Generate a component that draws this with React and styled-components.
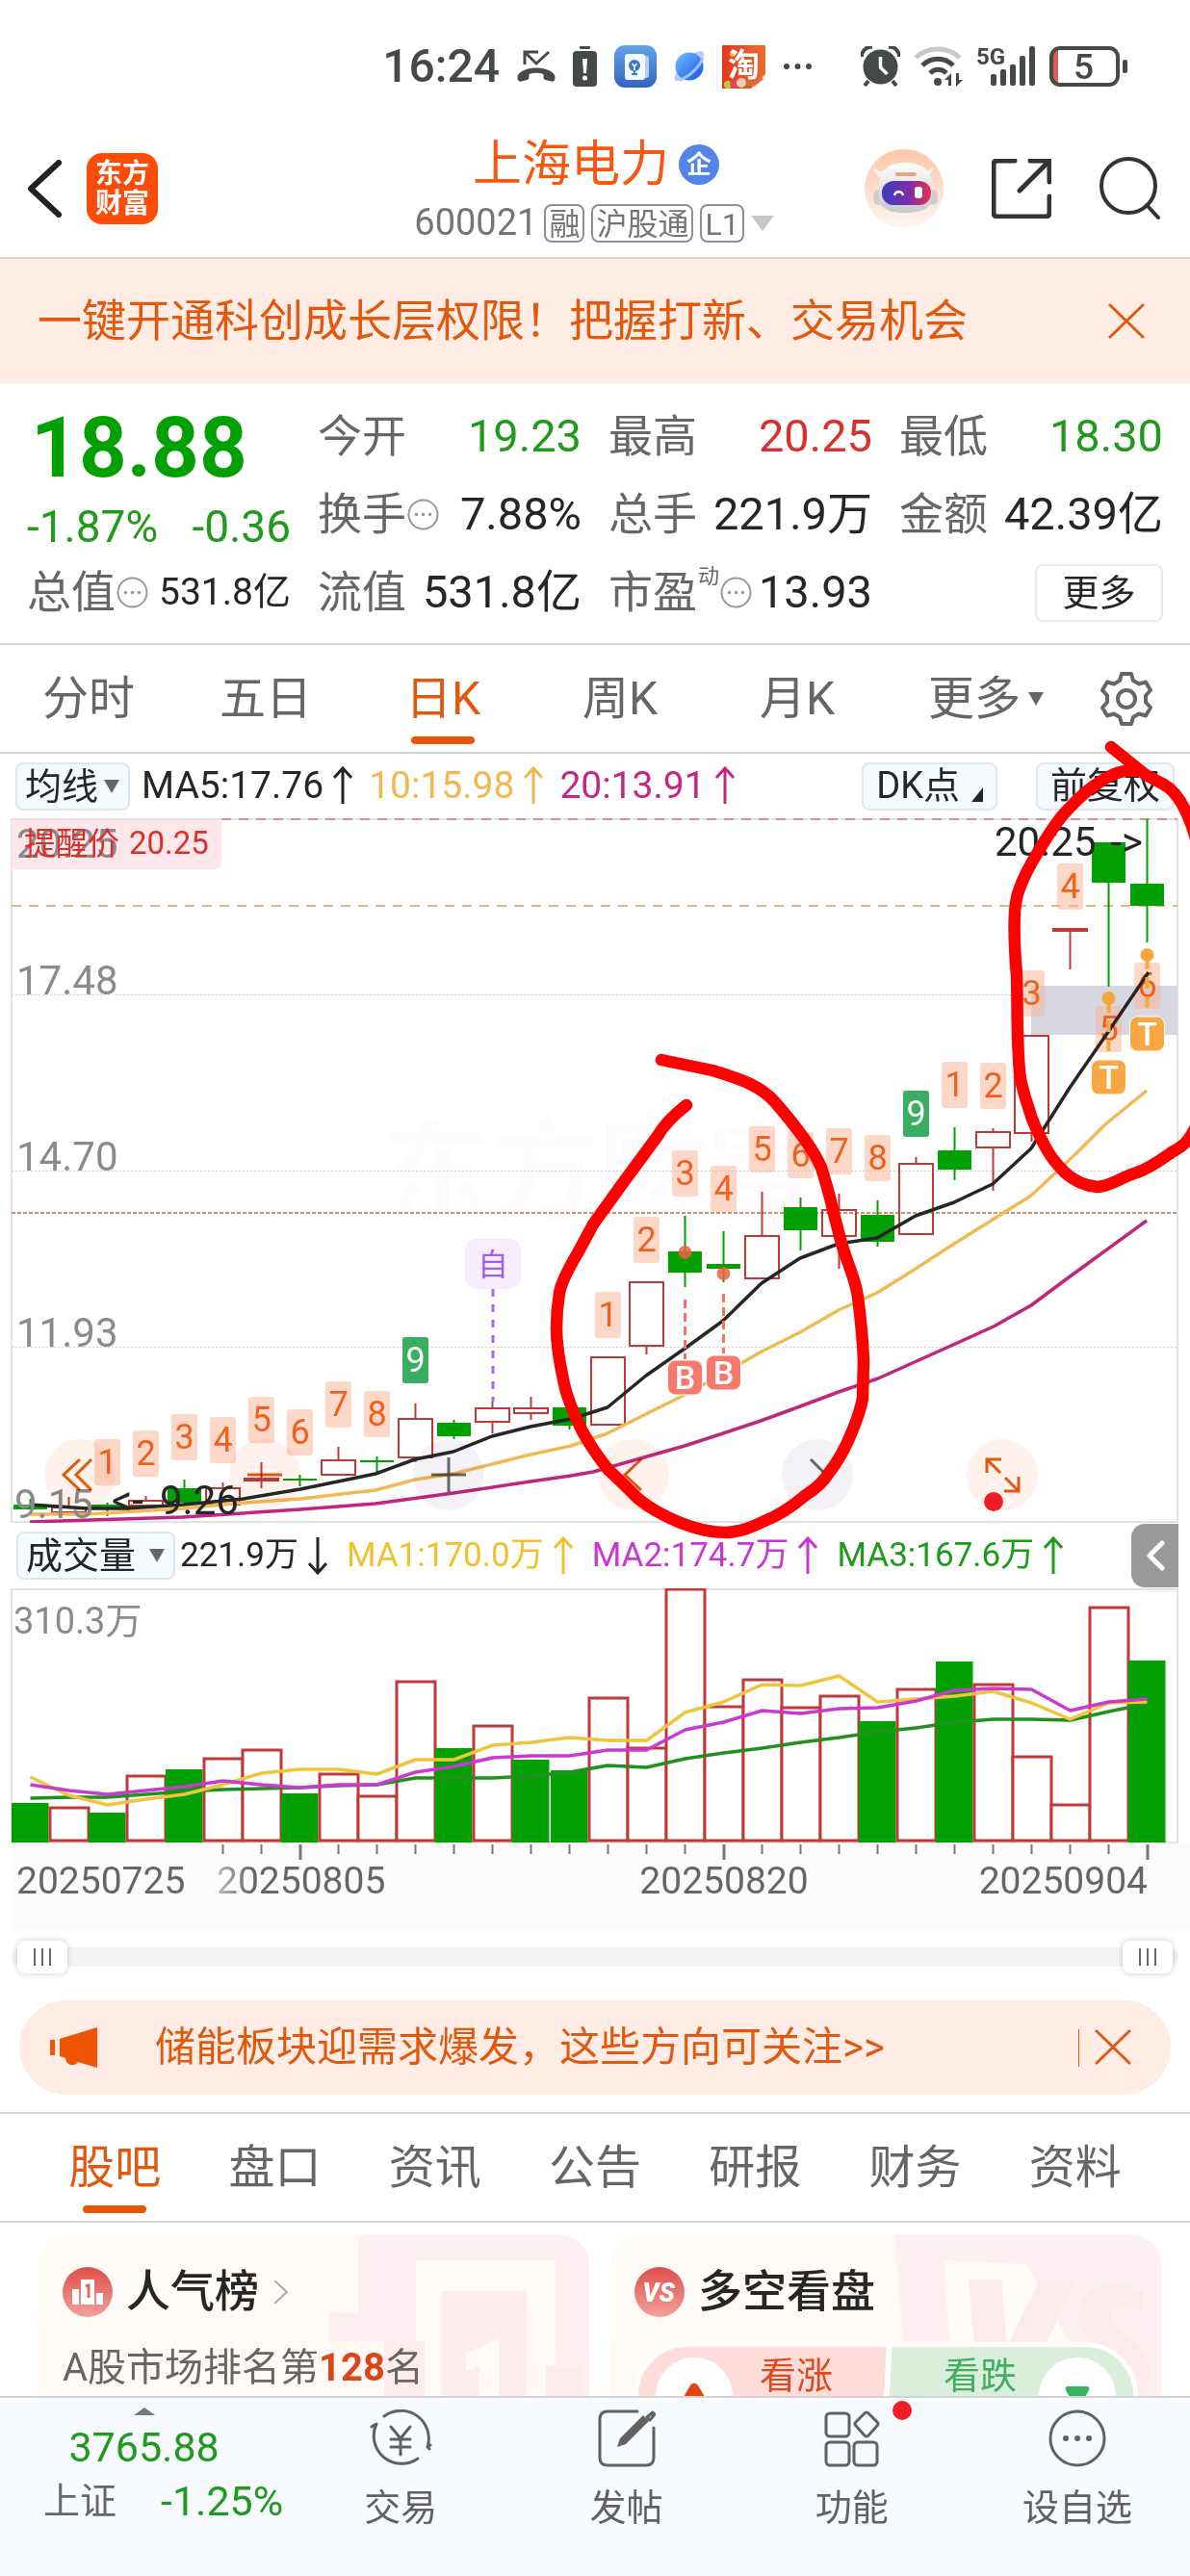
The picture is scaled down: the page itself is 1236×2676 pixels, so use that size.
import React from 'react';
import styled, { createGlobalStyle, css } from 'styled-components';

const FONT = 'Roboto, "Noto Sans CJK SC", "Noto Sans", sans-serif';
const ORANGE = '#e0590f';
const ACCENT = '#ea5504';
const GREEN = '#1f9a1c';
const BAR_GREEN = '#03a003';
const RED = '#d9302c';
const BAR_RED = '#bd3a38';
const INK = '#262626';
const GREY = '#666';
const LINE = '#d4d4d6';

const GlobalStyle = createGlobalStyle`
  *, *::before, *::after { box-sizing: border-box; }
  body { margin: 0; background: #fff; font-family: ${FONT}; line-height: 1.2; color: ${INK}; }
  button, select, input { font: inherit; color: inherit; margin: 0; }
  button { border: 0; padding: 0; background: none; cursor: pointer; }
  h1, h2, p, dl, dd, dt { margin: 0; font-weight: inherit; font-size: inherit; }
  a { color: inherit; text-decoration: none; }
  svg { display: block; }
`;

const Screen = styled.div`
  height: 100vh;
  display: flex;
  flex-direction: column;
  overflow: hidden;
`;

const Content = styled.main`
  flex: 1;
  min-height: 0;
  overflow-x: hidden;
  overflow-y: auto;
  scrollbar-width: none;
`;

/* ---------- status bar ---------- */
const StatusBar = styled.div`
  height: 124px;
  padding: 14px 64px 0 0;
  display: flex;
  align-items: flex-start;
  justify-content: flex-end;
  gap: 50px;
  color: #454a47;
`;

const StatusGroup = styled.div`
  display: flex;
  align-items: center;
  height: 110px;
  gap: ${(p) => p.$gap}px;
`;

const Clock = styled.span`
  font-size: 48px;
  font-weight: 500;
`;

/* ---------- header ---------- */
const Header = styled.header`
  height: 145px;
  padding: 0 30px 0 28px;
  display: grid;
  grid-template-columns: 1fr auto 1fr;
  align-items: center;
  border-bottom: 2px solid ${LINE};
`;

const HeaderSide = styled.div`
  display: flex;
  align-items: center;
  gap: ${(p) => p.$gap}px;
  justify-content: ${(p) => (p.$end ? 'flex-end' : 'flex-start')};
`;

const Brand = styled.a`
  width: 74px;
  height: 74px;
  border-radius: 16px;
  background: #fc4c05;
  color: #fff;
  font-size: 28px;
  line-height: 31px;
  font-weight: 700;
  display: grid;
  place-content: center;
  text-align: center;
`;

const TitleBlock = styled.div`
  display: grid;
  gap: 10px;
  justify-items: center;
`;

const TitleRow = styled.div`
  display: flex;
  align-items: center;
  gap: 10px;
  height: 62px;
  padding: 4px 0 0 4px;
`;

const StockName = styled.h1`
  font-size: 51px;
  line-height: 62px;
  color: #f8570f;
`;

const CompanyBadge = styled.span`
  width: 42px;
  height: 42px;
  border-radius: 50%;
  background: #5384e6;
  color: #fff;
  font-size: 26px;
  line-height: 42px;
  font-weight: 700;
  text-align: center;
`;

const CodeRow = styled.div`
  display: flex;
  align-items: center;
  gap: 7px;
  height: 44px;
  color: #757575;
  font-size: 38px;
`;

const MarketTag = styled.span`
  height: 40px;
  padding: 0 3px;
  border: 2px solid #909090;
  border-radius: 8px;
  font-size: 32px;
  line-height: 38px;
`;

const Caret = styled.span`
  display: inline-block;
  width: 0;
  height: 0;
  border: ${(p) => p.$half || 7}px solid transparent;
  border-bottom-width: 0;
  border-top: ${(p) => p.$tall || 14}px solid ${(p) => p.$color || '#666'};
`;

/* ---------- announcement ---------- */
const Announcement = styled.section`
  height: 129px;
  padding: 0 47px 0 39px;
  display: flex;
  align-items: center;
  justify-content: space-between;
  background: #ffede5;
  color: ${ORANGE};
  font-size: 46px;
`;

/* ---------- quote ---------- */
const QuotePanel = styled.section`
  padding: 15px 28px 12px;
  display: grid;
  grid-template-columns: repeat(4, 1fr);
  grid-auto-rows: 81px;
  column-gap: 28px;
  border-bottom: 2px solid ${LINE};
  font-size: 46px;
`;

const PriceCell = styled.div`
  grid-row: span 2;
  padding-top: 10px;
  color: #03a003;
`;

const Price = styled.div`
  padding-left: 4px;
  font-size: 87px;
  line-height: 84px;
  font-weight: 700;
`;

const Change = styled.div`
  display: flex;
  justify-content: space-between;
  margin-top: 12px;
  font-size: 46px;
  line-height: 56px;
  color: ${GREEN};
`;

const QuoteItem = styled.div`
  display: flex;
  align-items: center;
  justify-content: space-between;
  white-space: nowrap;
`;

const QuoteLabel = styled.span`
  display: flex;
  align-items: center;
  gap: 1px;
  color: ${GREY};
`;

const QuoteSup = styled.sup`
  align-self: flex-start;
  font-size: 22px;
  line-height: 22px;
`;

const TONES = { up: RED, down: GREEN, flat: INK };
const QuoteValue = styled.span`
  color: ${(p) => TONES[p.$tone || 'flat']};
  font-size: ${(p) => (p.$small ? 39 : 47)}px;
`;

const MoreButton = styled.button`
  justify-self: end;
  align-self: center;
  width: 133px;
  height: 60px;
  border: 2px solid #e7e7ea;
  border-radius: 8px;
  font-size: 38px;
  line-height: 54px;
`;

/* ---------- tabs ---------- */
const TabBar = styled.nav`
  display: grid;
  grid-template-columns: ${(p) => p.$columns};
  height: 113px;
  padding: 0 ${(p) => p.$pad || 0}px;
  border-bottom: 2px solid ${LINE};
`;

const Tab = styled.button`
  position: relative;
  display: flex;
  align-items: center;
  justify-content: center;
  gap: 8px;
  font-size: 48px;
  color: ${(p) => (p.$active ? ORANGE : GREY)};
  ${(p) =>
    p.$active &&
    css`
      &::after {
        content: '';
        position: absolute;
        bottom: 8px;
        left: 50%;
        width: 66px;
        height: 8px;
        margin-left: -33px;
        border-radius: 4px;
        background: ${ACCENT};
      }
    `}
`;

const GearButton = styled.button`
  display: flex;
  align-items: center;
  padding-left: 13px;
  color: ${GREY};
`;

/* ---------- charts ---------- */
const ChartSection = styled.section`
  position: relative;
`;

const ChartToolbar = styled.div`
  height: 67px;
  padding: 0 16px;
  display: flex;
  align-items: center;
  gap: 12px;
  white-space: nowrap;
`;

const VolumeToolbar = styled(ChartToolbar)`
  height: 68px;
  padding: 0 12px 0 17px;
  gap: 5px;
`;

const PickerBox = styled.label`
  display: grid;
  align-items: center;
  & > * { grid-area: 1 / 1; }
  & > span { justify-self: end; margin-right: 11px; pointer-events: none; }
`;

const Picker = styled.select`
  appearance: none;
  height: 50px;
  padding: 0 ${(p) => p.$right}px 0 8px;
  border: 2px solid #e0e6ec;
  border-radius: 8px;
  background: #f5faff;
  font-size: 38px;
  line-height: 46px;
`;

const ChipButton = styled.button`
  display: flex;
  align-items: center;
  gap: 12px;
  height: 50px;
  padding: 0 ${(p) => p.$pad}px;
  border: 2px solid #e0e6ec;
  border-radius: 8px;
  background: #f5faff;
  font-size: 38px;
`;

const ChipGroup = styled.div`
  display: flex;
  gap: 40px;
  margin-left: auto;
`;

const Legend = styled.div`
  display: flex;
  gap: ${(p) => p.$gap}px;
  font-size: ${(p) => p.$size}px;
`;

const LegendItem = styled.span`
  display: flex;
  align-items: center;
  gap: 10px;
  color: ${(p) => p.$color};
`;

const CollapseButton = styled.button`
  width: 49px;
  height: 66px;
  margin-left: auto;
  display: grid;
  place-items: center;
  border-radius: 14px 0 0 14px;
  background: #9b989b;
`;

const PriceArea = styled.div`
  position: relative;
`;

const ChartTools = styled.div`
  position: absolute;
  left: 46px;
  right: 158px;
  bottom: 13px;
  display: flex;
  justify-content: space-between;
  mix-blend-mode: multiply;
`;

const RoundTool = styled.button`
  position: relative;
  width: 74px;
  height: 74px;
  border-radius: 50%;
  background: ${(p) => (p.$grey ? '#f5f2f7' : '#fff1ec')};
  color: ${(p) => (p.$grey ? '#666' : ORANGE)};
  mix-blend-mode: multiply;
`;

const Dot = styled.i`
  position: absolute;
  width: 20px;
  height: 20px;
  border-radius: 50%;
  background: #f01e23;
  left: ${(p) => p.$left};
  top: ${(p) => p.$top}px;
`;

const MarkerLayer = styled.svg`
  position: absolute;
  top: 0;
  left: 0;
  width: 100%;
  overflow: visible;
  pointer-events: none;
`;

const Plot = styled.svg`
  width: 100%;
  height: auto;
  font-family: ${FONT};
`;

/* ---------- range slider ---------- */
const RangeTrack = styled.div`
  height: 54px;
  margin: 0 12px;
  display: grid;
  align-items: center;
  & > * { grid-area: 1 / 1; }
  &::before {
    content: '';
    grid-area: 1 / 1;
    height: 20px;
    border-radius: 10px;
    background: #f5f2f6;
  }
`;

const RangeInput = styled.input`
  appearance: none;
  width: auto;
  margin: 0 6px;
  height: 36px;
  background: none;
  pointer-events: none;
  &::-webkit-slider-thumb {
    appearance: none;
    width: 52px;
    height: 34px;
    border-radius: 8px;
    pointer-events: auto;
    background:
      linear-gradient(#666, #666) 17px 8px / 2px 18px no-repeat,
      linear-gradient(#666, #666) 25px 8px / 2px 18px no-repeat,
      linear-gradient(#666, #666) 33px 8px / 2px 18px no-repeat,
      #fff;
    box-shadow: 0 0 6px rgba(60, 50, 70, 0.25);
  }
`;

/* ---------- notice ---------- */
const NoticeWrap = styled.section`
  padding: 18px 20px;
  border-bottom: 2px solid ${LINE};
`;

const Notice = styled.div`
  height: 98px;
  padding: 0 41px 0 31px;
  display: flex;
  align-items: center;
  border-radius: 49px;
  background: #ffede5;
  color: ${ORANGE};
  font-size: 42px;
`;

const NoticeText = styled.a`
  flex: 1;
  margin-left: 58px;
`;

const NoticeDivider = styled.span`
  width: 1px;
  height: 39px;
  margin-right: 16px;
  background: ${ORANGE};
`;

/* ---------- cards ---------- */
const Cards = styled.section`
  display: grid;
  grid-template-columns: 1fr 1fr;
  gap: 22px;
  padding: 13px 30px 30px 40px;
`;

const Card = styled.article`
  position: relative;
  height: 300px;
  padding: 32px 25px;
  overflow: hidden;
  border-radius: 30px;
  background: linear-gradient(180deg, #fffbf6 0%, #fffaf6 60%, #fff3f4 100%);
`;

const CardArt = styled.svg`
  position: absolute;
  top: 0;
  right: 0;
`;

const CardHead = styled.h2`
  position: relative;
  display: flex;
  align-items: center;
  gap: 14px;
  height: 54px;
  font-size: 46px;
  font-weight: 500;
`;

const CardText = styled.p`
  position: relative;
  margin-top: 26px;
  font-size: 40px;
  line-height: 52px;
  color: ${GREY};
  b { color: #dc4518; font-weight: 700; }
`;

const VoteBar = styled.div`
  position: relative;
  display: grid;
  grid-template-columns: 1fr 1fr;
  height: 100px;
  margin: 30px 4px 0;
  border-radius: 50px;
  overflow: hidden;
  box-shadow: 0 0 0 5px #fff;
  background: linear-gradient(93deg, #fedcda 49.6%, #fff 49.7%, #fff 50.7%, #d9efdc 50.8%);
`;

const VoteButton = styled.button`
  display: flex;
  align-items: flex-start;
  justify-content: space-between;
  flex-direction: ${(p) => (p.$down ? 'row-reverse' : 'row')};
  padding: ${(p) => (p.$down ? '11px 18px 0 60px' : '11px 55px 0 18px')};
  font-size: 38px;
  line-height: 38px;
  color: ${(p) => (p.$down ? '#45ae60' : '#dc4b1c')};
`;

const VoteDisc = styled.span`
  width: 80px;
  height: 80px;
  display: grid;
  place-items: center;
  border-radius: 50%;
  background: #fff;
`;

/* ---------- bottom bar ---------- */
const BottomBar = styled.nav`
  height: 187px;
  flex: none;
  display: grid;
  grid-template-columns: 299fr repeat(4, 234fr);
  background: #f7fbff;
  border-top: 2px solid ${LINE};
`;

const IndexLink = styled.a`
  display: grid;
  grid-template-rows: 8px 48px 48px;
  row-gap: 8px;
  padding-top: 10px;
  align-content: start;
  justify-items: center;
  font-size: 43px;
  line-height: 50px;
  color: ${GREEN};
`;

const UpMark = styled.i`
  border: 11px solid transparent;
  border-top-width: 0;
  border-bottom: 8px solid #777;
`;

const IndexRow = styled.span`
  display: flex;
  gap: 46px;
  padding-left: 40px;
  small { font-size: 38px; color: ${GREY}; }
`;

const NavItem = styled.a`
  position: relative;
  display: flex;
  flex-direction: column;
  align-items: center;
  gap: 20px;
  padding-top: 12px;
  font-size: 38px;
  line-height: 44px;
  color: #616161;
`;

/* ---------- icons ---------- */
const stroke = (w, c = 'currentColor') => ({
  fill: 'none', stroke: c, strokeWidth: w, strokeLinecap: 'round', strokeLinejoin: 'round',
});

const CloseIcon = () => (
  <svg width="38" height="38" viewBox="0 0 38 38"><path d="M2 2l34 33M36 2L2 35" {...stroke(3)} /></svg>
);

const InfoIcon = () => (
  <svg width="33" height="33" viewBox="0 0 33 33">
    <circle cx="16.5" cy="16.5" r="15" fill="none" stroke="#999" strokeWidth="2" />
    <g fill="#999"><circle cx="9.5" cy="16.5" r="1.8" /><circle cx="16.5" cy="16.5" r="1.8" /><circle cx="23.5" cy="16.5" r="1.8" /></g>
  </svg>
);

const ArrowIcon = ({ down }) => (
  <svg width="20" height="40" viewBox="0 0 20 40">
    <path d={down ? 'M10 1v37M1 28l9 10 9-10' : 'M10 39V2M1 12l9-10 9 10'} fill="none" stroke="currentColor" strokeWidth="3" />
  </svg>
);

const MissedCall = () => (
  <svg width="40" height="34" viewBox="0 0 40 34">
    <path d="M8 15V2h14M8 2l12 12L33 2" fill="none" stroke="currentColor" strokeWidth="3" />
    <path d="M1 31c-2-5 2-9 9-11 6-2 14-2 20 0 7 2 11 6 9 11-.5 1.500-2 2-3.500 1.600l-6-1.600c-2-.6-2-2-2-6-5-1.600-10-1.600-15 0 0 4 0 5.400-2 6l-6 1.600c-1.500.4-3-.1-3.500-1.600z" fill="currentColor" />
  </svg>
);

const LowBattery = () => (
  <svg width="25" height="42" viewBox="0 0 25 42">
    <rect x="7" y="0" width="11" height="3" rx="1" fill="currentColor" />
    <rect x="0" y="5" width="25" height="37" rx="4" fill="currentColor" />
    <path d="M10 13h5l-1 15h-3z" fill="#fff" /><circle cx="12.500" cy="33" r="2.500" fill="#fff" />
  </svg>
);

const NotesApp = () => (
  <svg width="44" height="44" viewBox="0 0 44 44">
    <defs><linearGradient id="notes" x2="0" y2="1"><stop stopColor="#64a3e6" /><stop offset="1" stopColor="#3363c0" /></linearGradient></defs>
    <rect width="44" height="44" rx="11" fill="url(#notes)" />
    <rect x="20" y="11" width="16" height="23" rx="3" fill="#b4d0f3" />
    <rect x="11" y="9" width="21" height="27" rx="3" fill="#f4f9ff" />
    <circle cx="21" cy="21" r="6" fill="#3b76cf" /><path d="M18 30h6M21 29v-7" stroke="#3b76cf" strokeWidth="2" fill="none" />
    <path d="M18.500 19l2.500 3 2.500-3M21 22v4" stroke="#fff" strokeWidth="1.500" fill="none" />
  </svg>
);

const PlanetApp = () => (
  <svg width="32" height="34" viewBox="0 0 32 34">
    <defs><linearGradient id="planet" x2="1" y2="1"><stop stopColor="#6bc4fb" /><stop offset="1" stopColor="#1d50e8" /></linearGradient></defs>
    <path d="M21 3c6-3 11-3 10 3C29 15 14 30 5 32c-6 1-5-5-2-10z" fill="#b9cdf8" />
    <circle cx="16" cy="17" r="14.500" fill="url(#planet)" />
    <path d="M30 8C27 17 16 28 6 31" stroke="#9fc6fb" strokeWidth="3" fill="none" />
  </svg>
);

const ShopApp = () => (
  <svg width="45" height="45" viewBox="0 0 45 45">
    <defs><linearGradient id="shop" x2="1"><stop stopColor="#e2381f" /><stop offset="1" stopColor="#ee6a2c" /></linearGradient></defs>
    <rect width="45" height="45" fill="url(#shop)" />
    <path d="M30 45l15-15v15z" fill="#fff" />
    <circle cx="6" cy="41" r="4" fill="#b9cf42" /><circle cx="12" cy="40" r="4" fill="#e8455c" />
    <circle cx="20" cy="39" r="5" fill="#ecd2b4" /><circle cx="29" cy="39" r="3" fill="#cf6d45" />
    <path d="M32 42l10-8" stroke="#e36e49" strokeWidth="3" />
    <circle cx="11" cy="9" r="3" fill="#fcc437" />
    <text x="6" y="32" fontSize="33" fontWeight="700" fill="#fff" fontFamily={FONT}>淘</text>
  </svg>
);

const StatusDots = () => (
  <svg width="31" height="8" viewBox="0 0 31 8"><g fill="currentColor"><circle cx="4" cy="4" r="3" /><circle cx="15.500" cy="4" r="3" /><circle cx="27" cy="4" r="3" /></g></svg>
);

const AlarmIcon = () => (
  <svg width="41" height="42" viewBox="0 0 41 42">
    <circle cx="20.500" cy="21.500" r="18" fill="currentColor" />
    <path d="M1 11c0-6 5-11 11-10M40 11c0-6-5-11-11-10M8 36l-4 5M33 36l4 5" fill="none" stroke="currentColor" strokeWidth="4" />
    <path d="M20.500 11v11l7 7" fill="none" stroke="#fff" strokeWidth="3.500" />
  </svg>
);

const WifiIcon = () => (
  <svg width="51" height="42" viewBox="0 0 51 42">
    <path d="M2 12C15 0 35 0 48 12" fill="none" stroke="#c9c7cb" strokeWidth="5" />
    <path d="M9 20c9-9 23-9 32 0M17 28c5-5 12-5 17 0" fill="none" stroke="currentColor" strokeWidth="5" />
    <circle cx="25" cy="37" r="4" fill="currentColor" />
    <path d="M32 35l7-7v13h-3v-6zM51 35l-7 7V28h3v7z" fill="currentColor" />
  </svg>
);

const SignalIcon = () => (
  <svg width="62" height="42" viewBox="0 0 62 42" overflow="visible">
    <text x="0" y="19" fontSize="24" fontWeight="700" fill="currentColor" fontFamily={FONT}>5G</text>
    <g fill="currentColor">
      <rect x="15" y="29" width="6" height="12" rx="2" /><rect x="25" y="24" width="6" height="17" rx="2" />
      <rect x="35" y="19" width="6" height="22" rx="2" /><rect x="45" y="10" width="6" height="31" rx="2" />
      <rect x="55" y="0" width="6" height="41" rx="2" />
    </g>
  </svg>
);

const BatteryIcon = () => (
  <svg width="82" height="42" viewBox="0 0 82 42">
    <path d="M9 3h-1q-6 2-6 9v18q0 7 6 9h1z" fill="#dd5a56" />
    <rect x="2" y="2" width="69" height="38" rx="9" fill="none" stroke="currentColor" strokeWidth="4" />
    <rect x="76" y="14" width="5" height="14" rx="2" fill="currentColor" />
    <text x="35.500" y="34" fontSize="37" fontWeight="500" textAnchor="middle" fill="currentColor" fontFamily={FONT}>5</text>
  </svg>
);

const Robot = () => (
  <svg width="82" height="82" viewBox="0 0 82 82">
    <defs>
      <linearGradient id="halo" x2="0" y2="1"><stop stopColor="#fdc6a8" /><stop offset="1" stopColor="#fff6f0" /></linearGradient>
      <linearGradient id="visor" x2="1"><stop stopColor="#3f3cbf" /><stop offset=".55" stopColor="#7a2fa8" /><stop offset="1" stopColor="#e8334f" /></linearGradient>
      <linearGradient id="helmet" x2="0" y2="1"><stop stopColor="#fff" /><stop offset="1" stopColor="#c9c5cc" /></linearGradient>
    </defs>
    <circle cx="41" cy="41" r="41" fill="url(#halo)" />
    <path d="M9 18c0 6 3 10 10 12l4-8c-6 2-11 0-14-4zM71 18c0 6-3 10-10 12l-4-8c6 2 11 0 14-4z" fill="#f3eeee" />
    <rect x="9" y="42" width="12" height="16" rx="6" fill="#cfcbd0" /><rect x="64" y="42" width="12" height="16" rx="6" fill="#cfcbd0" />
    <path d="M15 38c0-16 10-24 27-24s28 8 28 24v10c0 12-8 18-28 18s-27-6-27-18z" fill="url(#helmet)" />
    <rect x="32" y="24" width="22" height="4" rx="2" fill="#e8a778" />
    <rect x="18" y="33" width="51" height="25" rx="12" fill="url(#visor)" />
    <path d="M31 48c1-5 8-5 9 0" fill="none" stroke="#fff" strokeWidth="2.500" />
    <rect x="52" y="39" width="8" height="12" rx="3" fill="#fff" />
  </svg>
);

const ShareIcon = () => (
  <svg width="62" height="62" viewBox="0 0 62 62"><path d="M24 2H6q-4 0-4 4v50q0 4 4 4h50q4 0 4-4V39M40 2h20v22M60 2L29 33" {...stroke(5, '#333')} /></svg>
);

const SearchIcon = () => (
  <svg width="64" height="66" viewBox="0 0 64 66"><circle cx="30" cy="30" r="28" fill="none" stroke="#333" strokeWidth="4" /><path d="M49 50l12 13" {...stroke(4, '#333')} /></svg>
);

const GearIcon = () => (
  <svg width="58" height="58" viewBox="0 0 58 58">
    <path d="M24 3h10l2 7 6 3.500 7-2 5 8.500-5 5.500v7l5 5.500-5 8.500-7-2-6 3.500-2 7H24l-2-7-6-3.500-7 2-5-8.500 5-5.500v-7l-5-5.500 5-8.500 7 2 6-3.500z" {...stroke(4)} />
    <circle cx="29" cy="29" r="9" fill="none" stroke="currentColor" strokeWidth="4" />
  </svg>
);

const TOOL_PATHS = {
  fast: 'M49 21L33 37l16 16M37 21L20 37l17 16',
  minus: 'M19 37h36',
  plus: 'M19 37h36M37 19v36',
  prev: 'M45 21L28 37l17 16',
  next: 'M30 21l16 16-16 16',
  expand: 'M21 35V21h15M21 21l14 14M54 39v15H39M54 54L40 40',
};

const ToolGlyph = ({ kind }) => (
  <svg width="74" height="74" viewBox="0 0 74 74"><path d={TOOL_PATHS[kind]} fill="none" stroke="currentColor" strokeWidth="3" /></svg>
);

const Megaphone = () => (
  <svg width="52" height="44" viewBox="0 0 52 44" fill="#f05506">
    <rect x="1" y="14" width="5" height="16" /><path d="M11 13L50 1v42l-20-6q-3 4-8 3-5-2-5-7l-6-2z" />
  </svg>
);

const TradeIcon = () => (
  <svg width="70" height="60" viewBox="0 0 70 60">
    <path d="M18 7a29 29 0 0 1 45 32l3-2M8 16l-3 2M5 18l5-3a29 29 0 0 0 43 36M63 39l2 2" {...stroke(3)} />
    <path d="M25 18l10 12 10-12M25 31h20M25 39h20M35 30v17" {...stroke(3)} />
  </svg>
);

const PostIcon = () => (
  <svg width="60" height="60" viewBox="0 0 60 60">
    <path d="M41 2H10q-8 0-8 8v40q0 8 8 8h40q8 0 8-8V19" {...stroke(3)} />
    <path d="M20 39l3-9L47 6l6 6-24 24z" fill="currentColor" /><path d="M51 8l6-5 2 2-5 6z" {...stroke(3)} />
  </svg>
);

const AppsIcon = () => (
  <svg width="60" height="60" viewBox="0 0 60 60">
    <g {...stroke(3)}>
      <rect x="3" y="4" width="24" height="24" rx="4" /><rect x="3" y="34" width="24" height="24" rx="4" /><rect x="32" y="34" width="24" height="24" rx="4" />
      <path d="M43 4q2-2 4 0l9 9q2 2 0 4l-9 10q-2 2-4 0l-9-10q-2-2 0-4z" />
    </g>
  </svg>
);

const DotsIcon = () => (
  <svg width="60" height="60" viewBox="0 0 60 60">
    <circle cx="30" cy="30" r="28" fill="none" stroke="currentColor" strokeWidth="3" />
    <g fill="currentColor"><circle cx="18" cy="30" r="3" /><circle cx="30" cy="30" r="3" /><circle cx="42" cy="30" r="3" /></g>
  </svg>
);

/* ---------- chart data ---------- */
const cx = (i) => 31.5 + 40 * i;

// [direction, body top, body bottom, high, low]
const CANDLES = [
  ['g', 1563, 1568, 1557, 1568], ['r', 1566, 1571, 1555, 1571], ['g', 1563, 1566, 1561, 1575],
  ['r', 1559, 1564, 1554, 1564], ['g', 1546, 1561, 1537, 1563], ['r', 1546, 1563, 1540, 1563],
  ['r', 1536, 1538, 1519, 1546], ['g', 1536, 1538, 1532, 1544], ['r', 1517, 1532, 1503, 1532],
  ['g', 1517, 1519, 1513, 1529], ['r', 1474, 1514, 1458, 1519], ['g', 1478, 1492, 1475, 1495],
  ['r', 1463, 1477, 1456, 1489], ['r', 1463, 1468, 1451, 1475], ['g', 1462, 1481, 1462, 1485],
  ['r', 1410, 1480, 1410, 1480], ['r', 1332, 1398, 1332, 1407], ['g', 1300, 1322, 1263, 1337],
  ['g', 1313, 1318, 1279, 1332], ['r', 1284, 1328, 1238, 1328], ['g', 1254, 1278, 1244, 1299],
  ['r', 1257, 1284, 1240, 1318], ['g', 1262, 1290, 1247, 1295], ['r', 1209, 1282, 1202, 1282],
  ['g', 1195, 1215, 1171, 1226], ['r', 1176, 1192, 1172, 1237], ['r', 1076, 1177, 1076, 1186],
  ['r', 965, 967, 965, 1007], ['g', 875, 917, 875, 1025], ['g', 918, 941, 851, 979],
];

const SEQUENCE = [
  [2, 1, 1495], [3, 2, 1486], [4, 3, 1469], [5, 4, 1472], [6, 5, 1451], [7, 6, 1464], [8, 7, 1435], [9, 8, 1445], [10, 9, 1389],
  [15, 1, 1342], [16, 2, 1264], [17, 3, 1195], [18, 4, 1211], [19, 5, 1170], [20, 6, 1176], [21, 7, 1172], [22, 8, 1179], [23, 9, 1133],
  [24, 1, 1103], [25, 2, 1104], [26, 3, 1008], [27, 4, 897], [28, 5, 1045], [29, 6, 1000],
];

const MA5 = '31,1563 91,1567 131,1567 191,1563 253,1557 312,1547 390,1531 431,1516 471,1508 511,1492 551,1482 593,1474 631,1462 671,1429 711,1401 751,1372 791,1333 831,1307 871,1292 911,1286 951,1263 991,1249 1031,1230 1071,1193 1111,1130 1151,1072 1193,1010';
const MA10 = '31,1573 91,1573 190,1567 253,1561 312,1557 390,1548 431,1537 471,1531 511,1521 551,1511 593,1502 631,1489 671,1469 711,1449 751,1427 791,1404 831,1384 871,1361 911,1343 951,1318 991,1292 1031,1267 1071,1242 1117,1199 1148,1168 1191,1133';
const MA20 = '31,1581 190,1576 312,1568 390,1562 471,1551 551,1539 593,1533 616,1529 711,1502 751,1489 790,1476 831,1461 871,1446 912,1432 952,1414 1032,1378 1071,1356 1110,1327 1191,1268';

const VOLUMES = [
  ['g', 1873], ['r', 1878], ['g', 1883], ['r', 1845], ['g', 1838], ['r', 1827], ['r', 1818], ['g', 1863], ['r', 1843], ['r', 1866],
  ['r', 1747], ['g', 1816], ['r', 1793], ['g', 1828], ['g', 1839], ['r', 1764], ['r', 1816], ['r', 1651], ['r', 1773], ['r', 1745],
  ['r', 1774], ['r', 1762], ['g', 1788], ['r', 1755], ['g', 1726], ['r', 1750], ['r', 1825], ['r', 1875], ['r', 1670], ['g', 1725],
];
const VMA1 = [1846, 1865, 1875, 1869, 1864, 1854, 1842, 1838, 1838, 1843, 1828, 1828, 1813, 1810, 1805, 1808, 1808, 1779, 1768, 1750, 1751, 1741, 1768, 1765, 1762, 1757, 1769, 1786, 1769, 1768];
const VMA2 = [1854, 1860, 1864, 1860, 1856, 1850, 1854, 1857, 1854, 1854, 1841, 1835, 1826, 1824, 1824, 1818, 1818, 1797, 1789, 1777, 1780, 1775, 1774, 1767, 1756, 1754, 1755, 1777, 1768, 1765];
const VMA3 = [1868, 1867, 1867, 1864, 1861, 1859, 1858, 1857, 1855, 1854, 1847, 1847, 1847, 1845, 1841, 1834, 1836, 1827, 1821, 1816, 1810, 1805, 1799, 1795, 1789, 1786, 1786, 1787, 1778, 1770];
const points = (ys) => ys.map((y, i) => `${cx(i)},${y}`).join(' ');

const Candle = ({ x, d: [dir, top, bottom, high, low] }) => {
  if (dir === 'g') {
    return (
      <g fill={BAR_GREEN}>
        <rect x={x - 1} y={high} width="2" height={low - high} />
        <rect x={x - 17.5} y={top} width="35" height={bottom - top} />
      </g>
    );
  }
  return (
    <g stroke={BAR_RED} strokeWidth="2" fill="none">
      <path d={`M${x} ${high}V${top}M${x} ${bottom}V${low}`} />
      <rect x={x - 17.5} y={top} width="35" height={bottom - top} />
    </g>
  );
};

const SequenceBadge = ({ x, y, n }) => (
  <g>
    <rect x={x - 13.5} y={y} width="27" height="48" rx="3" fill={n === 9 ? '#37ae62' : 'rgba(252,178,148,0.5)'} />
    <text x={x} y={y + 36} fontSize="36" textAnchor="middle" fill={n === 9 ? '#fff' : '#ee6220'}>{n}</text>
  </g>
);

const TradeMark = ({ x, y, letter, color }) => (
  <g>
    <rect x={x - 18} y={y - 18} width="36" height="36" rx="8" fill={color} stroke="#fff" strokeWidth="1" />
    <text x={x} y={y + 12} fontSize="34" fontWeight="500" textAnchor="middle" fill="#fff">{letter}</text>
  </g>
);

const PriceChart = () => (
  <Plot viewBox="0 850 1236 732" role="img" aria-label="日K线图">
    <text x="398" y="1258" fontSize="112" fontWeight="700" fill="#fefbff">东方财富</text>
    <rect x="12" y="851" width="1211" height="730" fill="none" stroke="#e2e2e4" strokeWidth="2" />
    <g stroke="#cfcfd2" strokeDasharray="2 2">
      <path d="M12 1033.500H1223M12 1216.500H1223M12 1399.500H1223" />
    </g>
    <rect x="1071" y="1024" width="152" height="51" fill="#d6d7e0" />
    <path d="M230 851H1223" stroke="#d98a95" strokeWidth="2" strokeDasharray="10 8" />
    <path d="M12 941H1223" stroke="#dfb883" strokeWidth="2" strokeDasharray="10 8" />
    <path d="M12 1260H1223" stroke="#c8926b" strokeWidth="2" strokeDasharray="4 2" />
    {CANDLES.map((d, i) => <Candle key={i} x={cx(i)} d={d} />)}
    {SEQUENCE.map(([i, n, y]) => <SequenceBadge key={`${i}-${n}`} x={cx(i)} y={y} n={n} />)}
    <g fill="none" strokeWidth="3.500" strokeLinejoin="round">
      <polyline points={MA20} stroke="#bf277f" />
      <polyline points={MA10} stroke="#efbb54" />
      <polyline points={MA5} stroke={INK} />
    </g>
    <path d="M512 1339V1456" stroke="#a866ea" strokeWidth="3" strokeDasharray="8 8" />
    <rect x="483" y="1287" width="58" height="52" rx="12" fill="#f7edfe" />
    <text x="512" y="1325" fontSize="32" textAnchor="middle" fill="#a35fe9">自</text>
    <g stroke="#f07468" strokeWidth="3" strokeDasharray="9 5">
      <path d="M711.500 1350V1412M751.500 1344V1406" />
    </g>
    <g fill="#e8623f" opacity=".85"><circle cx="711.500" cy="1301" r="7" /><circle cx="751.500" cy="1323" r="7" /></g>
    <TradeMark x={711.5} y={1431} letter="B" color="#f8796c" />
    <TradeMark x={751.5} y={1426} letter="B" color="#f8796c" />
    <g stroke="#f9a63c" strokeWidth="4" strokeDasharray="12 8"><path d="M1151.500 1040V1100M1191.500 995V1054" /></g>
    <g fill="#f9a63c"><circle cx="1151.500" cy="1037" r="7" /><circle cx="1191.500" cy="992" r="7" /></g>
    <TradeMark x={1151.5} y={1119} letter="T" color="#f9a742" />
    <TradeMark x={1191.5} y={1074} letter="T" color="#f9a742" />
    <path d="M12 852h218v43q0 8-8 8H12z" fill="#fde7eb" />
    <g fontSize="42" fill="#8b8b8d">
      <text x="17" y="891">20.25</text>
      <text x="17" y="1033">17.48</text>
      <text x="17" y="1216">14.70</text>
      <text x="17" y="1399">11.93</text>
      <text x="15" y="1577">9.15</text>
    </g>
    <text x="25" y="888" fontSize="33" fill={RED}>提醒价</text>
    <text x="134" y="887" fontSize="33" fill={RED}>20.25</text>
    <g fontSize="42" fill={INK}>
      <text x="1033" y="889">20.25</text><text x="1187" y="889" textAnchor="end">-&gt;</text>
      <text x="116" y="1573">&lt;-</text><text x="166" y="1573">9.26</text>
    </g>
  </Plot>
);

const TICKS = Array.from({ length: 25 }, (_, k) => k + 5);
const MAJOR = [7, 18, 29];

const VolumeChart = () => (
  <Plot viewBox="0 1650 1236 356" role="img" aria-label="成交量图">
    <defs>
      <linearGradient id="fade" gradientUnits="userSpaceOnUse" x1="222" x2="262" y1="0" y2="0">
        <stop stopColor="#c4c4c6" /><stop offset="1" stopColor="#666" />
      </linearGradient>
    </defs>
    <rect x="12" y="1914" width="1224" height="92" fill="#fdfafe" />
    <rect x="12" y="1651" width="1211" height="263" fill="#fff" stroke="#e2e2e4" strokeWidth="2" />
    <text x="14" y="1697" fontSize="38" fill="#8b8b8d">310.3万</text>
    {VOLUMES.map(([dir, y], i) => (dir === 'g'
      ? <rect key={i} x={cx(i) - 19.5} y={y} width="38.500" height={1914 - y} fill={BAR_GREEN} />
      : <rect key={i} x={cx(i) - 19.5} y={y} width="40" height={1912 - y} fill="#fff" stroke={BAR_RED} strokeWidth="3" />))}
    <g fill="none" strokeWidth="3.500" strokeLinejoin="round">
      <polyline points={points(VMA3)} stroke="#22901f" />
      <polyline points={points(VMA1)} stroke="#efc53c" />
      <polyline points={points(VMA2)} stroke="#c93bcf" />
    </g>
    {TICKS.map((i) => (
      <rect key={i} x={cx(i) - 1} y="1916" width={MAJOR.includes(i) ? 3 : 2} height={MAJOR.includes(i) ? 16 : 10} fill="#777" />
    ))}
    <g fontSize="39" fill="#666">
      <text x="17" y="1967">20250725</text>
      <text x="225" y="1967" fill="url(#fade)">20250805</text>
      <text x="752" y="1967" textAnchor="middle">20250820</text>
      <text x="1192" y="1967" textAnchor="end">20250904</text>
    </g>
  </Plot>
);

const HandDrawnMarks = () => (
  <MarkerLayer viewBox="0 783 1236 800" aria-hidden="true">
    <g fill="none" stroke="#fe0000" strokeWidth="12.500" strokeLinecap="round" strokeLinejoin="round">
      <path d="M687 1101L740 1112C770 1121 790 1128 805 1145C825 1168 846 1196 853 1213C862 1240 866 1262 871 1280C878 1310 888 1325 891 1347C894 1370 896 1390 897 1413L896 1453C893 1468 890 1475 885 1487C878 1505 872 1516 861 1530C855 1540 848 1546 837 1553C824 1564 810 1574 794 1580C780 1587 770 1591 754 1592C737 1592 722 1588 707 1582C690 1575 675 1567 663 1557C650 1544 640 1534 632 1527C620 1512 612 1500 605 1487C594 1465 588 1450 585 1433C580 1410 578 1395 578 1380C578 1365 579 1355 581 1343C584 1328 594 1312 601 1300L616 1272L644 1233L683 1180C690 1168 700 1158 713 1148" />
      <path d="M1154 776L1190 805L1209 815C1218 820 1228 832 1236 853C1256 900 1270 1080 1250 1150C1244 1168 1240 1176 1234 1184C1228 1192 1222 1194 1217 1197C1204 1206 1195 1213 1181 1218C1166 1222 1155 1232 1140 1233C1125 1232 1115 1226 1106 1218C1096 1208 1090 1200 1085 1190C1077 1175 1072 1165 1069 1153C1063 1135 1060 1125 1059 1113C1056 1080 1057 1050 1056 1013C1054 990 1053 965 1054 947C1055 935 1056 930 1059 923C1065 905 1074 892 1083 877C1092 862 1100 850 1110 840C1122 827 1134 817 1146 810C1158 803 1165 800 1180 801" />
    </g>
  </MarkerLayer>
);

/* ---------- page ---------- */
const PERIODS = ['分时', '五日', '日K', '周K', '月K'];
const SECTIONS = ['股吧', '盘口', '资讯', '公告', '研报', '财务', '资料'];
const NAV = [['交易', TradeIcon], ['发帖', PostIcon], ['功能', AppsIcon], ['设自选', DotsIcon]];

const Quote = ({ label, value, tone, info, sup, small }) => (
  <QuoteItem>
    <QuoteLabel>{label}{sup && <QuoteSup>{sup}</QuoteSup>}{info && <InfoIcon />}</QuoteLabel>
    <QuoteValue $tone={tone} $small={small}>{value}</QuoteValue>
  </QuoteItem>
);

export default function App() {
  return (
    <Screen>
      <GlobalStyle />
      <Content>
        <StatusBar>
          <StatusGroup $gap={18}>
            <Clock>16:24</Clock>
            <MissedCall /><LowBattery /><NotesApp /><PlanetApp /><ShopApp /><StatusDots />
          </StatusGroup>
          <StatusGroup $gap={14}><AlarmIcon /><WifiIcon /><SignalIcon /><BatteryIcon /></StatusGroup>
        </StatusBar>

        <Header>
          <HeaderSide $gap={26}>
            <button aria-label="返回">
              <svg width="36" height="60" viewBox="0 0 36 60"><path d="M33 3L4 30l29 27" {...stroke(6, '#222')} /></svg>
            </button>
            <Brand href="#home"><span>东方</span><span>财富</span></Brand>
          </HeaderSide>
          <TitleBlock>
            <TitleRow><StockName>上海电力</StockName><CompanyBadge>企</CompanyBadge></TitleRow>
            <CodeRow>
              <span>600021</span>
              <MarketTag>融</MarketTag><MarketTag>沪股通</MarketTag><MarketTag>L1</MarketTag>
              <Caret $half={12} $tall={16} $color="#c9c9cb" />
            </CodeRow>
          </TitleBlock>
          <HeaderSide $gap={50} $end>
            <button aria-label="智能助手"><Robot /></button>
            <button aria-label="分享"><ShareIcon /></button>
            <button aria-label="搜索"><SearchIcon /></button>
          </HeaderSide>
        </Header>

        <Announcement>
          <span>一键开通科创成长层权限！把握打新、交易机会</span>
          <button aria-label="关闭公告"><CloseIcon /></button>
        </Announcement>

        <QuotePanel>
          <PriceCell>
            <Price>18.88</Price>
            <Change><span>-1.87%</span><span>-0.36</span></Change>
          </PriceCell>
          <Quote label="今开" value="19.23" tone="down" />
          <Quote label="最高" value="20.25" tone="up" />
          <Quote label="最低" value="18.30" tone="down" />
          <Quote label="换手" value="7.88%" info />
          <Quote label="总手" value="221.9万" />
          <Quote label="金额" value="42.39亿" />
          <Quote label="总值" value="531.8亿" info small />
          <Quote label="流值" value="531.8亿" />
          <Quote label="市盈" sup="动" value="13.93" info />
          <MoreButton>更多</MoreButton>
        </QuotePanel>

        <TabBar $columns="repeat(5, 46fr) 52fr 27fr" aria-label="周期">
          {PERIODS.map((p) => <Tab key={p} $active={p === '日K'}>{p}</Tab>)}
          <Tab aria-haspopup="menu">更多<Caret $half={8} $tall={14} /></Tab>
          <GearButton aria-label="设置"><GearIcon /></GearButton>
        </TabBar>

        <ChartSection>
          <ChartToolbar>
            <PickerBox>
              <Picker $right={30} aria-label="主图指标"><option>均线</option></Picker>
              <Caret $half={8} />
            </PickerBox>
            <Legend $gap={17} $size={39}>
              <LegendItem $color={INK}>MA5:17.76<ArrowIcon /></LegendItem>
              <LegendItem $color="#efb94f">10:15.98<ArrowIcon /></LegendItem>
              <LegendItem $color="#c3277f">20:13.91<ArrowIcon /></LegendItem>
            </Legend>
            <ChipGroup>
              <ChipButton $pad={13}>
                DK点
                <svg width="12" height="32" viewBox="0 0 12 32"><path d="M12 17v15H0z" fill={INK} /></svg>
              </ChipButton>
              <ChipButton $pad={13}>前复权</ChipButton>
            </ChipGroup>
          </ChartToolbar>

          <PriceArea>
            <PriceChart />
            <ChartTools>
              <RoundTool aria-label="最早"><ToolGlyph kind="fast" /></RoundTool>
              <RoundTool aria-label="缩小"><ToolGlyph kind="minus" /></RoundTool>
              <RoundTool $grey aria-label="放大"><ToolGlyph kind="plus" /></RoundTool>
              <RoundTool aria-label="向左"><ToolGlyph kind="prev" /></RoundTool>
              <RoundTool $grey aria-label="向右"><ToolGlyph kind="next" /></RoundTool>
              <RoundTool aria-label="全屏"><ToolGlyph kind="expand" /><Dot $left="18px" $top={55} /></RoundTool>
            </ChartTools>
          </PriceArea>

          <VolumeToolbar>
            <PickerBox>
              <Picker $right={38} aria-label="副图指标"><option>成交量</option></Picker>
              <Caret $half={8} />
            </PickerBox>
            <Legend $gap={20} $size={35}>
              <LegendItem $color={INK}>221.9万<ArrowIcon down /></LegendItem>
              <LegendItem $color="#efc02f">MA1:170.0万<ArrowIcon /></LegendItem>
              <LegendItem $color="#cb36d2">MA2:174.7万<ArrowIcon /></LegendItem>
              <LegendItem $color={GREEN}>MA3:167.6万<ArrowIcon /></LegendItem>
            </Legend>
            <CollapseButton aria-label="展开">
              <svg width="20" height="32" viewBox="0 0 20 32"><path d="M17 3L4 16l13 13" {...stroke(5, '#fff')} /></svg>
            </CollapseButton>
          </VolumeToolbar>
          <VolumeChart />
          <HandDrawnMarks />
        </ChartSection>

        <RangeTrack>
          <RangeInput type="range" min="0" max="100" defaultValue="0" aria-label="起始日期" />
          <RangeInput type="range" min="0" max="100" defaultValue="100" aria-label="结束日期" />
        </RangeTrack>

        <NoticeWrap>
          <Notice>
            <Megaphone />
            <NoticeText href="#topic">储能板块迎需求爆发，这些方向可关注&gt;&gt;</NoticeText>
            <NoticeDivider />
            <button aria-label="关闭通知"><CloseIcon /></button>
          </Notice>
        </NoticeWrap>

        <TabBar $columns="repeat(7, 1fr)" $pad={36} aria-label="栏目">
          {SECTIONS.map((s) => <Tab key={s} $active={s === '股吧'}>{s}</Tab>)}
        </TabBar>

        <Cards>
          <Card>
            <CardArt width="300" height="300" viewBox="0 0 300 300">
              <path d="M60 0H300V300H265V26H120V110H30V80H60z" fill="#fdeef3" opacity=".8" />
              <path d="M147 58h88v242h-88zM87 110h42v190H87zM255 136h36v164h-36z" fill="#fdecec" />
              <path d="M172 122l34-14v80h-20v-52l-14 5z" fill="#fffaf6" />
            </CardArt>
            <CardHead>
              <svg width="52" height="52" viewBox="0 0 52 52">
                <defs><linearGradient id="disc" x2="0" y2="1"><stop stopColor="#dd4f4b" /><stop offset="1" stopColor="#f3a09c" /></linearGradient></defs>
                <circle cx="26" cy="26" r="26" fill="url(#disc)" />
                <path d="M10 23h7v16h-7zM19 13h14v26H19zM35 27h7v12h-7z" fill="#fff" />
                <path d="M24 20l3-1v13" fill="none" stroke="#e06a66" strokeWidth="3" />
              </svg>
              人气榜
              <svg width="18" height="26" viewBox="0 0 18 26"><path d="M3 2l12 11L3 24" {...stroke(2, '#aaa')} /></svg>
            </CardHead>
            <CardText>A股市场排名第<b>128</b>名</CardText>
          </Card>
          <Card>
            <CardArt width="280" height="300" viewBox="0 0 280 300">
              <path d="M3 0H280V300H190V120L140 30 54 26 60 110H12z" fill="#fdeef3" opacity=".8" />
              <path d="M80 46h34l6 70 34-70h38l-62 130H92zM262 60c-40-30-86 10-62 44 16 22 40 20 34 40-6 14-30 8-44-2l-14 30c30 24 84 18 92-22 8-42-48-48-40-68 4-12 22-8 30-2z" fill="#fdeaeb" />
            </CardArt>
            <CardHead>
              <svg width="52" height="52" viewBox="0 0 52 52">
                <circle cx="26" cy="26" r="26" fill="url(#disc)" />
                <text x="25" y="36" fontSize="27" fontWeight="900" fontStyle="italic" textAnchor="middle" fill="#fff" fontFamily={FONT}>VS</text>
              </svg>
              多空看盘
            </CardHead>
            <VoteBar>
              <VoteButton>
                <VoteDisc><svg width="38" height="32" viewBox="0 0 38 32"><path d="M15 5q4-5 8 0l13 22q1 4-3 4H5q-4 0-3-4z" fill="#e4430f" /></svg></VoteDisc>
                看涨
              </VoteButton>
              <VoteButton $down>
                <VoteDisc><svg width="26" height="20" viewBox="0 0 26 20"><path d="M3 0h20q3 0 2 4l-8 14q-4 3-8 0L1 4q-1-4 2-4z" fill="#36b35f" /></svg></VoteDisc>
                看跌
              </VoteButton>
            </VoteBar>
          </Card>
        </Cards>
      </Content>

      <BottomBar aria-label="底部导航">
        <IndexLink href="#index">
          <UpMark />
          <span>3765.88</span>
          <IndexRow><small>上证</small><span>-1.25%</span></IndexRow>
        </IndexLink>
        {NAV.map(([label, Icon]) => (
          <NavItem key={label} href={`#${label}`}>
            <Icon />
            {label}
            {label === '功能' && <Dot $left="calc(50% + 42px)" $top={3} />}
          </NavItem>
        ))}
      </BottomBar>
    </Screen>
  );
}
